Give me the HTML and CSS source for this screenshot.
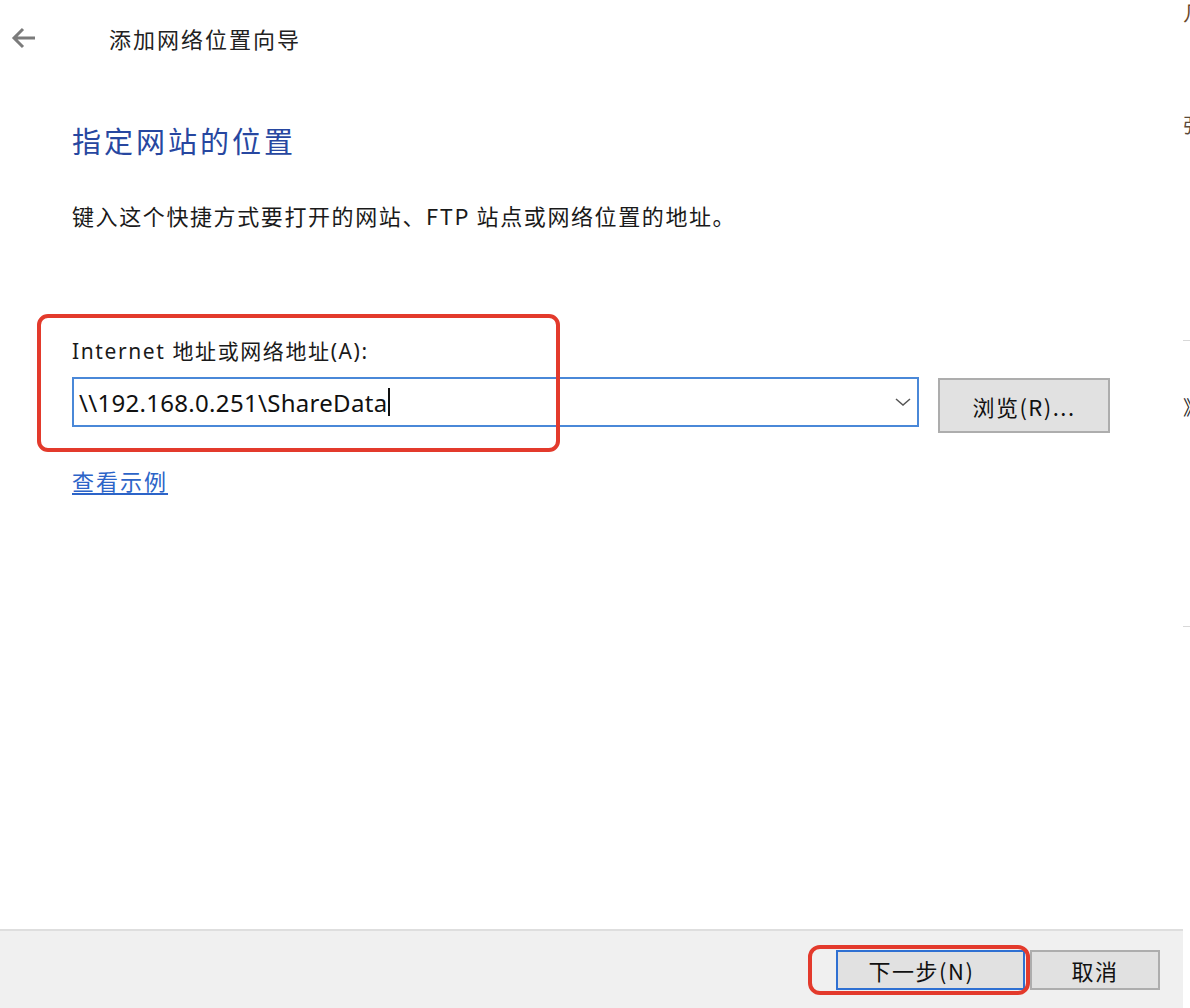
FILE: index.html
```html
<!DOCTYPE html>
<html lang="zh-CN">
<head>
<meta charset="utf-8">
<title>添加网络位置向导</title>
<link rel="stylesheet" href="styles.css">
</head>
<body>
<div class="screen">
  <div class="dialog">
    <div class="titlebar">
      <svg class="back" width="26" height="22" viewBox="0 0 26 22">
        <path d="M24 11H3M12 2L3 11l9 9" fill="none" stroke="#7b7b7b" stroke-width="3"/>
      </svg>
      <span class="title">添加网络位置向导</span>
    </div>
    <div class="content">
      <h1 class="heading">指定网站的位置</h1>
      <p class="desc">键入这个快捷方式要打开的网站、FTP 站点或网络位置的地址。</p>
      <div class="field-row">
        <div class="field">
          <div class="highlight"></div>
          <label class="label">Internet 地址或网络地址(A):</label>
          <div class="combo">
            <span class="value">\\192.168.0.251\ShareData</span><span class="caret"></span>
            <svg class="chev" width="16" height="10" viewBox="0 0 16 10"><path d="M1 2l7 6 7-6" fill="none" stroke="#555" stroke-width="1.5"/></svg>
          </div>
        </div>
        <button class="btn browse">浏览(R)...</button>
      </div>
      <a class="link" href="#">查看示例</a>
    </div>
    <div class="footer">
      <div class="next-wrap">
        <div class="highlight2"></div>
        <button class="btn next">下一步(N)</button>
      </div>
      <button class="btn cancel">取消</button>
    </div>
  </div>
  <div class="strip">
    <span class="g g1">几</span>
    <span class="g g2">弘</span>
    <span class="line l1"></span>
    <span class="g g3">》</span>
    <span class="line l2"></span>
  </div>
</div>
</body>
</html>
```
FILE: styles.css
```css
html, body {
  margin: 0;
  padding: 0;
  background: #ffffff;
}
body {
  font-family: "Noto Sans", "Noto Sans CJK SC", sans-serif;
  color: #1a1a1a;
}
.screen {
  width: 1190px;
  height: 1008px;
  display: flex;
  overflow: hidden;
}
.dialog {
  width: 1183px;
  height: 1008px;
  display: flex;
  flex-direction: column;
}
.titlebar {
  height: 76px;
  padding-bottom: 4px;
  display: flex;
  align-items: center;
  padding-left: 11px;
}
.back {
  display: block;
}
.title {
  margin-left: 72px;
  font-size: 22px;
  letter-spacing: 2px;
  color: #222;
  font-family: "Noto Sans CJK SC", sans-serif;
}
.content {
  flex: 1;
  padding: 38px 0 0 72px;
  display: flex;
  flex-direction: column;
  align-items: flex-start;
}
.heading {
  margin: 0;
  font-weight: normal;
  font-size: 29px;
  letter-spacing: 3px;
  color: #2747a0;
  font-family: "Noto Sans CJK SC", sans-serif;
  line-height: 44px;
}
.desc {
  margin: 38px 0 0 0;
  font-size: 22px;
  letter-spacing: 1.6px;
  color: #1a1a1a;
  font-family: "Noto Sans CJK SC", sans-serif;
  line-height: 30px;
}
.field-row {
  margin-top: 106px;
  display: flex;
  align-items: flex-end;
  gap: 19px;
}
.field {
  position: relative;
  width: 847px;
}
.highlight {
  position: absolute;
  left: -35px;
  top: -22px;
  width: 515px;
  height: 130px;
  border: 4px solid #e33a2c;
  border-radius: 11px;
  pointer-events: none;
}
.label {
  display: block;
  font-size: 21px;
  letter-spacing: 1.6px;
  color: #1a1a1a;
  line-height: 30px;
  margin-bottom: 11px;
  font-family: "Noto Sans", "Noto Sans CJK SC", sans-serif;
}
.combo {
  height: 46px;
  border: 2px solid #4a88d8;
  display: flex;
  align-items: center;
  padding-left: 5px;
  padding-right: 6px;
}
.value {
  font-size: 24px;
  letter-spacing: 0.3px;
  color: #111;
  font-family: "Noto Sans", sans-serif;
}
.caret {
  width: 2px;
  height: 28px;
  background: #111;
  margin-left: 1px;
}
.chev {
  margin-left: auto;
}
.btn {
  font-family: "Noto Sans CJK SC", sans-serif;
  font-size: 22px;
  letter-spacing: 1.5px;
  color: #111;
  background: #e1e1e1;
  border: 2px solid #adadad;
  padding: 0;
  cursor: default;
}
.browse {
  width: 172px;
  height: 55px;
  margin-bottom: -6px;
}
.link {
  margin-top: 38px;
  font-size: 22px;
  letter-spacing: 2px;
  color: #2c64c8;
  text-decoration: underline;
  text-underline-offset: 3px;
  font-family: "Noto Sans CJK SC", sans-serif;
  line-height: 30px;
}
.footer {
  height: 77px;
  background: #f0f0f0;
  border-top: 2px solid #dedede;
  display: flex;
  align-items: center;
  justify-content: flex-end;
  padding-right: 23px;
  gap: 5px;
}
.next-wrap {
  position: relative;
}
.highlight2 {
  position: absolute;
  left: -28px;
  top: -5px;
  width: 214px;
  height: 42px;
  border: 4px solid #e33a2c;
  border-radius: 12px;
  pointer-events: none;
}
.next {
  width: 189px;
  height: 40px;
  border: 2px solid #2f70d2;
  display: block;
  padding-right: 18px;
}
.cancel {
  width: 130px;
  height: 40px;
}
.strip {
  width: 7px;
  height: 1008px;
  position: relative;
  overflow: hidden;
  background: #fff;
}
.g {
  position: absolute;
  left: 0;
  font-size: 20px;
  font-family: "Noto Sans CJK SC", sans-serif;
  color: #2a2a2a;
}
.g1 { top: -2px; color: #6b4a2a; }
.g2 { top: 110px; color: #5a4a3a; }
.g3 { top: 392px; }
.line {
  position: absolute;
  left: 0;
  width: 7px;
  height: 1px;
  background: #d8d8d8;
}
.l1 { top: 340px; }
.l2 { top: 626px; }
```
